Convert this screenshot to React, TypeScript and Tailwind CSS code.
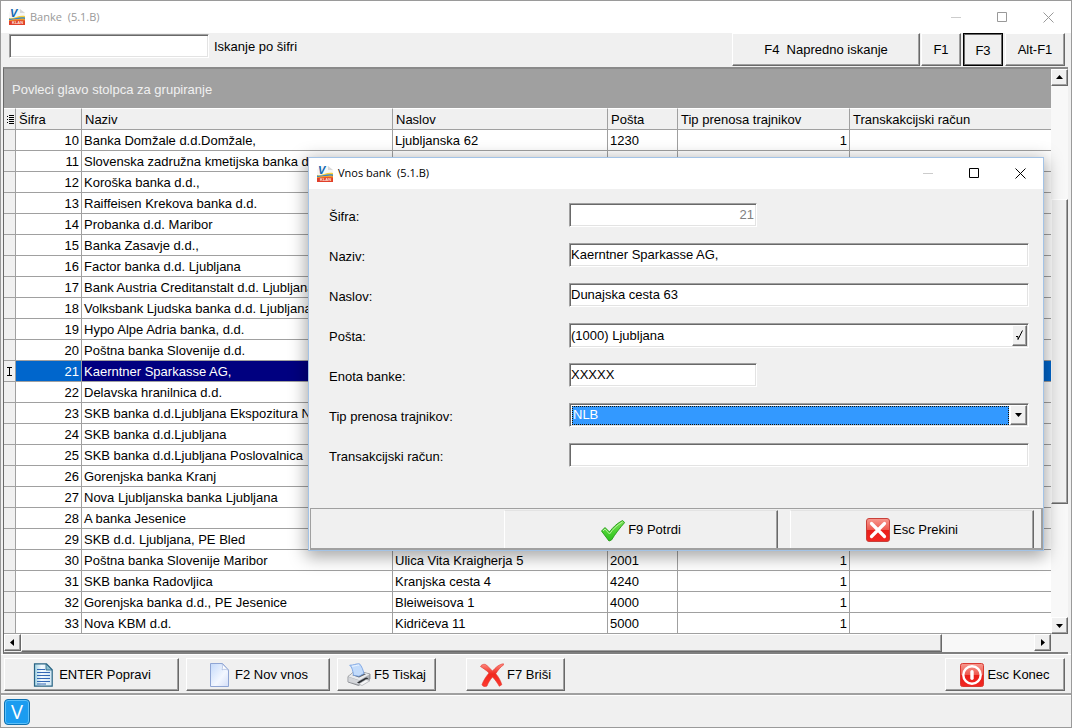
import type { ReactNode } from "react";

type Bank = {
  id: number;
  name: string;
  address?: string;
  post?: string;
  type?: number;
};

const banks: Bank[] = [
  { id: 10, name: "Banka Domžale d.d.Domžale,", address: "Ljubljanska 62", post: "1230", type: 1 },
  { id: 11, name: "Slovenska zadružna kmetijska banka d.d.", address: "Kolodvorska 9", post: "1000", type: 1 },
  { id: 12, name: "Koroška banka d.d.," },
  { id: 13, name: "Raiffeisen Krekova banka d.d." },
  { id: 14, name: "Probanka d.d. Maribor" },
  { id: 15, name: "Banka Zasavje d.d.," },
  { id: 16, name: "Factor banka d.d. Ljubljana" },
  { id: 17, name: "Bank Austria Creditanstalt d.d. Ljubljana" },
  { id: 18, name: "Volksbank Ljudska banka d.d. Ljubljana" },
  { id: 19, name: "Hypo Alpe Adria banka, d.d." },
  { id: 20, name: "Poštna banka Slovenije d.d." },
  { id: 21, name: "Kaerntner Sparkasse AG," },
  { id: 22, name: "Delavska hranilnica d.d." },
  { id: 23, name: "SKB banka d.d.Ljubljana Ekspozitura N" },
  { id: 24, name: "SKB banka d.d.Ljubljana" },
  { id: 25, name: "SKB banka d.d.Ljubljana Poslovalnica" },
  { id: 26, name: "Gorenjska banka Kranj" },
  { id: 27, name: "Nova Ljubljanska banka Ljubljana" },
  { id: 28, name: "A banka Jesenice" },
  { id: 29, name: "SKB d.d. Ljubljana, PE Bled" },
  { id: 30, name: "Poštna banka Slovenije Maribor", address: "Ulica Vita Kraigherja 5", post: "2001", type: 1 },
  { id: 31, name: "SKB banka Radovljica", address: "Kranjska cesta 4", post: "4240", type: 1 },
  { id: 32, name: "Gorenjska banka d.d., PE Jesenice", address: "Bleiweisova 1", post: "4000", type: 1 },
  { id: 33, name: "Nova KBM d.d.", address: "Kidričeva 11", post: "5000", type: 1 },
];

const selectedId = 21;

const columns = ["Šifra", "Naziv", "Naslov", "Pošta", "Tip prenosa trajnikov", "Transkakcijski račun"];

const sunken =
  "border border-t-[#a0a0a0] border-l-[#a0a0a0] border-r-white border-b-white bg-white shadow-[inset_1px_1px_0_#696969,inset_-1px_-1px_0_#e3e3e3]";
const raised =
  "border border-t-white border-l-white border-r-[#696969] border-b-[#696969] bg-[#f0f0f0] shadow-[inset_-1px_-1px_0_#a0a0a0]";
const cell = "h-[21px] overflow-hidden border-r border-b border-[#a0a0a0] px-0.5 pt-0.5 leading-[18px] whitespace-nowrap";

const AppIcon = () => (
  <svg className="h-4 w-4 shrink-0" viewBox="0 0 16 16" aria-hidden="true">
    <path d="M3 0h8l5 4v12H0V4z" fill="#f6f6f6" />
    <path d="M11 0v4h5z" fill="#d9d9d9" />
    <path d="M0 9c5 1 9-3 16-2v3H0z" fill="#f8cf3a" />
    <path d="M0 9.500c5 1 9-2 16-1v1.500c-6-1-10 1.500-16 1z" fill="#2f86cc" />
    <path d="M0 11c5 0 10-1.500 16-.500V16H0z" fill="#e0402a" />
    <path d="M0 11c5-.5 10-2 16-1v1.500c-6-.5-10 0-16 .5z" fill="#f39a2b" />
    <text x="1" y="8" fontSize="11" fontWeight="700" fontStyle="italic" fontFamily="Liberation Sans, sans-serif" fill="#0f67b1">V</text>
    <text x="3" y="15" fontSize="4" fontWeight="700" fontFamily="Liberation Sans, sans-serif" fill="#ffe3dc">KLAN</text>
  </svg>
);

const DocumentIcon = () => (
  <svg className="h-6 w-6 shrink-0" viewBox="0 0 24 24" aria-hidden="true">
    <defs>
      <linearGradient id="doc" x1="0" y1="0" x2="1" y2="0">
        <stop offset="0" stopColor="#9fd0e2" />
        <stop offset="0.4" stopColor="#f4fbff" />
        <stop offset="1" stopColor="#cfe6f4" />
      </linearGradient>
    </defs>
    <path d="M2.500 .8h12l5.700 6V23.200H2.500z" fill="url(#doc)" stroke="#2a6484" strokeWidth="1.2" />
    <path d="M14 1v6h6z" fill="#8cc0d2" stroke="#2a6484" strokeWidth=".8" />
    <path d="M5 6.500h8M5 9.500h13M5 12.500h13M5 15.500h13M5 18.500h13M5 21h9" stroke="#3568b5" />
  </svg>
);

const NewIcon = () => (
  <svg className="h-6 w-6 shrink-0" viewBox="0 0 24 24" aria-hidden="true">
    <defs>
      <linearGradient id="new" x1="0" y1="0" x2="1" y2="1">
        <stop offset="0" stopColor="#c3d9fa" />
        <stop offset="0.6" stopColor="#f3f7ff" />
        <stop offset="1" stopColor="#d3def8" />
      </linearGradient>
    </defs>
    <path d="M2.500 .5h12l6 6.500v16.500h-18z" fill="url(#new)" stroke="#8fa5d4" />
    <path d="M14 .8c.8 2 .6 4 0 6 2-.8 4-.6 6.300.4z" fill="#fff" stroke="#a5b6dc" strokeWidth=".7" />
  </svg>
);

const PrinterIcon = () => (
  <svg className="h-6 w-6 shrink-0" viewBox="0 0 24 24" aria-hidden="true">
    <path d="M1 13.500L6 9.500h11l6 1.500v5L11.500 22.500 1 19z" fill="#aeb1b6" stroke="#74777c" strokeWidth=".7" />
    <path d="M1.300 13.500L6 9.800h11l5.700 1.400-10.200 6z" fill="#e9ebee" />
    <path d="M1.300 14l11 3.600v4L1.300 18.700z" fill="#d4d6da" />
    <path d="M5 12l12-1.500 2 .8-7 3.200z" fill="#5c6066" />
    <path d="M6.500 12.300C6 8 5 4 2.700 2.200 6 2.500 9 .500 12.500.8 15 3.500 16 7 17 10.500l-5 2.800z" fill="#c2dbfb" stroke="#6d9be0" strokeWidth=".8" />
    <path d="M5 3.200c3 0 5-1.200 7-1.200" fill="none" stroke="#eef6ff" />
    <path d="M10 19.500l9-5 2.500.8-9 5.500z" fill="#2b2e32" />
    <path d="M11.500 21l7.500-4.500 4 1.200-8 4.800z" fill="#f6f6f7" stroke="#9b9ea3" strokeWidth=".6" />
  </svg>
);

const DeleteIcon = () => (
  <svg className="h-6 w-6 shrink-0" viewBox="0 0 24 24" aria-hidden="true">
    <defs>
      <linearGradient id="del" x1="0" y1="0" x2="0" y2="1">
        <stop offset="0" stopColor="#ff8a80" />
        <stop offset="0.45" stopColor="#f0281e" />
        <stop offset="1" stopColor="#ff3a30" />
      </linearGradient>
    </defs>
    <path
      d="M.5 3.500c1-2 4-3 6-1.500L12.500 8c3-3.500 7-7 11-7.200l.3.900c-3 2-6 5.500-8 9 3 3.500 5 7.500 6 11l-2.500 1.600c-2-3.500-4-6.500-6.800-9.300-2.500 3-4.500 6-5.500 9-2 1.200-4.500.5-5-1.500 1.500-4 4-8 7-11.500C6 7 3.500 5.500.5 3.500z"
      fill="url(#del)"
      stroke="#e0382e"
      strokeWidth=".6"
    />
  </svg>
);

const PowerIcon = () => (
  <svg className="h-6 w-6 shrink-0" viewBox="0 0 24 24" aria-hidden="true">
    <defs>
      <linearGradient id="red" x1="0" y1="0" x2="0" y2="1">
        <stop offset="0" stopColor="#f79a90" />
        <stop offset="0.48" stopColor="#ee5a50" />
        <stop offset="0.52" stopColor="#e91f1a" />
        <stop offset="1" stopColor="#f22722" />
      </linearGradient>
    </defs>
    <rect x=".5" y=".5" width="23" height="23" rx="2" fill="url(#red)" stroke="#d93a32" />
    <circle cx="12" cy="12" r="8.700" fill="none" stroke="#fff" strokeWidth="2.400" />
    <rect x="10.300" y="7" width="3.400" height="10" rx="1.700" fill="#fff" />
  </svg>
);

const CancelIcon = () => (
  <svg className="h-6 w-6 shrink-0" viewBox="0 0 24 24" aria-hidden="true">
    <rect x=".5" y=".5" width="23" height="23" rx="2.500" fill="url(#red)" stroke="#c9403a" />
    <path d="M5.500 5.500l13 13M18.500 5.500l-13 13" stroke="#fff" strokeWidth="3.200" strokeLinecap="round" />
  </svg>
);

const ConfirmIcon = () => (
  <svg className="h-6 w-6 shrink-0" viewBox="0 0 24 24" aria-hidden="true">
    <defs>
      <linearGradient id="ok" x1="0" y1="0" x2="0" y2="1">
        <stop offset="0" stopColor="#7ee05a" />
        <stop offset="0.5" stopColor="#4fd435" />
        <stop offset="1" stopColor="#2dc01c" />
      </linearGradient>
    </defs>
    <path
      d="M.5 13L4 9.500l4.500 4.500C12 9 16 5.500 21.500 2.500l2.200 2c-5 5.500-9.500 11.500-13.200 17.500L8 23z"
      fill="url(#ok)"
      stroke="#219a14"
      strokeWidth=".9"
    />
    <path d="M2 13l2-2 4.500 5C12 11 16 7 21.500 4" fill="none" stroke="#c2f5a8" strokeWidth=".9" />
  </svg>
);

const TitleBar = ({ title, active }: { title: string; active?: boolean }) => (
  <header className={`flex shrink-0 items-center bg-white pl-2 ${active ? "h-[31px] text-black" : "h-8 text-[#999]"}`}>
    <AppIcon />
    <h1 className="flex-1 pl-[5px] font-['Open_Sans','Noto_Sans',sans-serif] text-[11px] whitespace-pre">{title}</h1>
    <button type="button" aria-label="Minimiraj" className="flex w-[46px] justify-center text-[#ccc]">
      <svg width="11" height="11" viewBox="0 0 11 11"><path d="M0 5.500h10" stroke="currentColor" /></svg>
    </button>
    <button type="button" aria-label="Povečaj" className="flex w-[46px] justify-center">
      <svg width="11" height="11" viewBox="0 0 11 11"><path d="M.5.500h9v9h-9z" fill="none" stroke="currentColor" /></svg>
    </button>
    <button type="button" aria-label="Zapri" className="flex w-[46px] justify-center">
      <svg width="11" height="11" viewBox="0 0 11 11"><path d="M.5.500l10 10M10.500.500l-10 10" stroke="currentColor" /></svg>
    </button>
  </header>
);

const PushButton = ({ className, children }: { className: string; children: ReactNode }) => (
  <button type="button" className={`flex h-[33px] shrink-0 items-center justify-center gap-[3px] whitespace-pre ${raised} ${className}`}>
    {children}
  </button>
);

const ScrollArrow = ({ label, points }: { label: string; points: string }) => (
  <button type="button" aria-label={label} className={`flex h-[17px] w-[17px] shrink-0 items-center justify-center ${raised}`}>
    <svg width="7" height="7" viewBox="0 0 7 7"><polygon points={points} /></svg>
  </button>
);

const Field = ({ id, label, children }: { id: string; label: string; children: ReactNode }) => (
  <div className="flex h-10 items-start">
    <label htmlFor={id} className="w-60 shrink-0 leading-7">{label}</label>
    {children}
  </div>
);

const BankDialog = () => (
  <div
    role="dialog"
    aria-label="Vnos bank"
    className="absolute top-[156px] right-[27px] w-[736px] border border-[#a3c3e6] bg-[#f0f0f0] shadow-[0_4px_16px_2px_rgba(0,0,0,0.35)]"
  >
    <TitleBar title="Vnos bank  (5.1.B)" active />
    <form className="h-[319px] pt-3.5 pr-3.5 pl-5">
      <Field id="sifra" label="Šifra:">
        <input id="sifra" defaultValue="21" readOnly className={`h-6 w-[188px] px-0.5 pb-0.5 text-right text-[#808080] ${sunken}`} />
      </Field>
      <Field id="naziv" label="Naziv:">
        <input id="naziv" defaultValue="Kaerntner Sparkasse AG," className={`h-6 min-w-0 flex-1 px-px pb-0.5 ${sunken}`} />
      </Field>
      <Field id="naslov" label="Naslov:">
        <input id="naslov" defaultValue="Dunajska cesta 63" className={`h-6 min-w-0 flex-1 px-px pb-0.5 ${sunken}`} />
      </Field>
      <Field id="posta" label="Pošta:">
        <div className={`flex h-[25px] min-w-0 flex-1 p-px ${sunken}`}>
          <input id="posta" defaultValue="(1000) Ljubljana" className="min-w-0 flex-1 outline-none" />
          <button type="button" aria-label="Izberi pošto" className={`flex w-[15px] items-center justify-center ${raised}`}>
            <svg width="8" height="11" viewBox="0 0 8 11"><path d="M0 6.500h2v3L6.500 .500" fill="none" stroke="#000" /></svg>
          </button>
        </div>
      </Field>
      <Field id="enota" label="Enota banke:">
        <input id="enota" defaultValue="XXXXX" className={`h-6 w-[188px] px-px pb-0.5 ${sunken}`} />
      </Field>
      <Field id="tip" label="Tip prenosa trajnikov:">
        <div className={`relative flex h-6 min-w-0 flex-1 p-px ${sunken}`}>
          <select
            id="tip"
            defaultValue="NLB"
            className="mr-[18px] ml-px h-[19px] min-w-0 flex-1 appearance-none self-center border border-dotted border-[#1a1000] bg-[#3399ff] leading-4 text-white"
          >
            <option>NLB</option>
          </select>
          <span className={`pointer-events-none absolute top-px right-px flex h-5 w-[17px] items-center justify-center ${raised}`}>
            <svg width="7" height="4" viewBox="0 0 7 4"><path d="M0 0h7L3.500 4z" /></svg>
          </span>
        </div>
      </Field>
      <Field id="racun" label="Transakcijski račun:">
        <input id="racun" className={`h-6 min-w-0 flex-1 px-px pb-0.5 ${sunken}`} />
      </Field>
    </form>
    <footer className="ml-px flex h-[42px] justify-end gap-3 border-t border-r-2 border-b-2 border-l border-[#a0a0a0] pt-px pr-[7px]">
      <button type="button" className="flex w-[274px] items-center justify-center gap-[3px] border-t border-r border-l border-t-[#e3e3e3] border-r-[#696969] border-l-white shadow-[inset_-1px_0_0_#a0a0a0]">
        <ConfirmIcon />
        F9 Potrdi
      </button>
      <button type="button" className="flex w-[244px] items-center justify-center gap-[3px] border-t border-r border-l border-t-[#e3e3e3] border-r-[#696969] border-l-white shadow-[inset_-1px_0_0_#a0a0a0]">
        <CancelIcon />
        Esc Prekini
      </button>
    </footer>
  </div>
);

const BankTable = () => (
  <table className="w-full table-fixed border-separate border-spacing-0">
    <colgroup>
      <col className="w-[12px]" />
      <col className="w-[66px]" />
      <col className="w-[311px]" />
      <col className="w-[215px]" />
      <col className="w-[70px]" />
      <col className="w-[172px]" />
      <col />
    </colgroup>
    <thead>
      <tr className="bg-[#f0f0f0]">
        <th className="h-[22px] border-t border-r border-b border-t-white border-r-[#a0a0a0] border-b-[#a0a0a0] p-0">
          <svg className="ml-[3px]" width="7" height="11" viewBox="0 0 7 11" aria-hidden="true">
            <path d="M2 1.500h5M2 3.500h5M2 5.500h5M2 7.500h5M2 9.500h5M0 2.500h1M0 5.500h1M0 8.500h1" stroke="#000" />
          </svg>
        </th>
        {columns.map((column) => (
          <th
            key={column}
            className="h-[22px] border-t border-r border-b border-t-white border-r-[#a0a0a0] border-b-[#a0a0a0] px-[3px] pt-0.5 text-left leading-[18px] font-normal whitespace-nowrap last:border-r-0"
          >
            {column}
          </th>
        ))}
      </tr>
    </thead>
    <tbody>
      {banks.map(({ id, name, address, post, type }) => {
        const selected = id === selectedId;
        return (
          <tr key={id} className={selected ? "bg-[#0066cc] text-white" : "bg-white"}>
            <td className="h-[21px] border-r border-b border-[#a0a0a0] bg-[#f0f0f0] p-0">
              {selected && (
                <svg className="ml-[3px]" width="5" height="9" viewBox="0 0 5 9" aria-hidden="true">
                  <path d="M0 .500h5M0 8.500h5M2.500 0v9" stroke="#000" />
                </svg>
              )}
            </td>
            <td className={`${cell} text-right`}>{id}</td>
            <td className={`${cell} ${selected ? "bg-[#000080]" : ""}`}>{name}</td>
            <td className={cell}>{address}</td>
            <td className={cell}>{post}</td>
            <td className={`${cell} text-right`}>{type}</td>
            <td className={`${cell} border-r-0`} />
          </tr>
        );
      })}
    </tbody>
  </table>
);

const App = () => (
  <div className="relative flex min-h-screen flex-col overflow-hidden border border-[#9a9a9a] bg-[#f0f0f0] font-['Liberation_Sans',Arial,sans-serif] text-[13px] text-black">
    <TitleBar title="Banke  (5.1.B)" />
    <div className="flex h-[34px] shrink-0 items-start pr-1.5 pl-2">
      <input id="iskanje" className={`mt-px h-6 w-[200px] px-px ${sunken}`} />
      <label htmlFor="iskanje" className="flex-1 pl-[5px] leading-7">Iskanje po šifri</label>
      <PushButton className="w-[188px]">F4  Napredno iskanje</PushButton>
      <PushButton className="ml-px w-10">F1</PushButton>
      <button type="button" className="ml-0.5 h-[33px] w-10 border border-black pt-0.5 shadow-[inset_0_0_0_1px_#696969]">F3</button>
      <PushButton className="ml-0.5 w-[60px]">Alt-F1</PushButton>
    </div>

    <main className="mr-[3px] ml-0.5 flex flex-1 flex-col border-t-2 border-b-2 border-l border-t-[#8a8a8a] border-b-[#808080] border-l-[#696969]">
      <div className="flex flex-1">
        <div className="min-w-0 flex-1 bg-white">
          <p className="h-[39px] bg-[#a0a0a0] pl-2 leading-[42px] text-[#f0f0f0]">Povleci glavo stolpca za grupiranje</p>
          <BankTable />
        </div>
        <div className="flex w-[17px] flex-col bg-[#f8f8f8]">
          <ScrollArrow label="Gor" points="0,5 7,5 3.5,1" />
          <div className="grow-[3]" />
          <div className={`grow-[8] ${raised}`} />
          <div className="grow-[3]" />
          <ScrollArrow label="Dol" points="0,2 7,2 3.5,6" />
        </div>
      </div>
      <div className="flex h-[18px] pr-[17px]">
        <ScrollArrow label="Levo" points="5,0 5,7 1,3.5" />
        <div className={`grow-[10] ${raised}`} />
        <div className="grow bg-[#f8f8f8]" />
        <ScrollArrow label="Desno" points="2,0 2,7 6,3.5" />
      </div>
    </main>

    <div className="flex h-[41px] shrink-0 items-start border-t border-b-2 border-t-white border-b-[#a0a0a0] pt-[3px] pr-1.5 pl-[3px]">
      <PushButton className="w-[175px]"><DocumentIcon />ENTER Popravi</PushButton>
      <PushButton className="ml-[7px] w-36"><NewIcon />F2 Nov vnos</PushButton>
      <PushButton className="ml-[7px] w-[99px]"><PrinterIcon />F5 Tiskaj</PushButton>
      <PushButton className="ml-[30px] w-[99px]"><DeleteIcon />F7 Briši</PushButton>
      <PushButton className="ml-auto w-[120px]"><PowerIcon />Esc Konec</PushButton>
    </div>
    <footer className="flex h-8 shrink-0 items-center border-t border-white pl-[3px]">
      <span className="flex h-[26px] w-[26px] items-center justify-center rounded border border-[#0f6fae] bg-[#1b9cf0] font-['Open_Sans','Noto_Sans',sans-serif] text-xl text-white shadow-[inset_0_0_0_1px_#5cc0fa]">
        V
      </span>
    </footer>

    <BankDialog />
  </div>
);

export default App;
